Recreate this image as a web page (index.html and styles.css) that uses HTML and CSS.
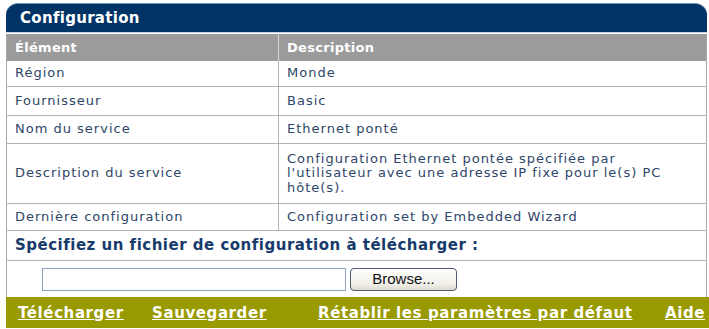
FILE: index.html
```html
<!DOCTYPE html>
<html lang="fr">
<head>
<meta charset="utf-8">
<title>Configuration</title>
<link rel="stylesheet" href="styles.css">
</head>
<body>
<div class="panel">
  <div class="title">Configuration</div>
  <table class="grid">
    <colgroup><col class="c1"><col class="c2"></colgroup>
    <thead>
      <tr class="head"><th>Élément</th><th>Description</th></tr>
    </thead>
    <tbody>
      <tr class="r1"><td>Région</td><td>Monde</td></tr>
      <tr class="r2"><td>Fournisseur</td><td>Basic</td></tr>
      <tr class="r3"><td>Nom du service</td><td>Ethernet ponté</td></tr>
      <tr class="r4"><td>Description du service</td><td>Configuration Ethernet pontée spécifiée par<br>l'utilisateur avec une adresse IP fixe pour le(s) PC<br>hôte(s).</td></tr>
      <tr class="r5"><td>Dernière configuration</td><td>Configuration set by Embedded Wizard</td></tr>
      <tr class="r6"><td colspan="2" class="spec">Spécifiez un fichier de configuration à télécharger :</td></tr>
      <tr class="r7"><td colspan="2" class="filecell"><div class="filerow"><input type="text" class="path"><button type="button" class="browse">Browse...</button></div></td></tr>
    </tbody>
  </table>
  <div class="actions">
    <a href="#" class="act">Télécharger</a>
    <a href="#" class="act">Sauvegarder</a>
    <a href="#" class="act">Rétablir les paramètres par défaut</a>
    <a href="#" class="act">Aide</a>
  </div>
</div>
</body>
</html>
```

FILE: styles.css
```css
html, body {
  margin: 0;
  padding: 0;
  background: #ffffff;
}
body {
  font-family: "DejaVu Sans", Verdana, sans-serif;
  font-size: 13px;
  color: #2e4668;
}
.panel {
  margin: 3px 0 0 6px;
  width: 703px;
}
.title {
  height: 30px;
  box-sizing: border-box;
  background: #003366;
  border-top: 1px solid #6f8fb5;
  border-radius: 12px 12px 0 0;
  border-bottom: 1px solid #c8d4e4;
  color: #ffffff;
  font-weight: bold;
  font-size: 15px;
  letter-spacing: 0.3px;
  line-height: 28px;
  padding-left: 14px;
  margin-right: 2px;
}
.grid {
  width: 701px;
  border-collapse: collapse;
  table-layout: fixed;
  border-left: 1px solid #a8a8a8;
  border-right: 1px solid #a8a8a8;
  margin-top: 1px;
}
.c1 { width: 272px; }
.c2 { width: auto; }
.grid th {
  background: #9b9b9b;
  color: #ffffff;
  font-weight: bold;
  font-size: 13px;
  letter-spacing: 0.3px;
  text-align: left;
  height: 27px;
  padding: 0 8px;
  box-sizing: border-box;
  border-left: 1px solid #d8d8d8;
}
.grid th:first-child { border-left: none; }
.grid td {
  height: 27px;
  padding: 0 8px;
  border-bottom: 1px solid #b4b4b4;
  border-left: 1px solid #b4b4b4;
  vertical-align: middle;
  line-height: 14.5px;
  letter-spacing: 1px;
  white-space: nowrap;
}
.grid td:first-child { border-left: none; }
.r1 td { height: 25px; }
.r2 td { height: 28px; }
.r3 td { height: 27px; }
.r4 td { height: 59px; }
.r5 td { height: 26px; }
.spec {
  height: 29px !important;
  font-weight: bold;
  font-size: 15px;
  color: #173b6b;
  letter-spacing: 0.5px !important;
}
.filecell {
  height: 36px !important;
  border-bottom: none !important;
  padding: 0 !important;
}
.filerow {
  display: flex;
  align-items: center;
  padding-left: 35px;
  gap: 4px;
}
.path {
  width: 304px;
  height: 23px;
  box-sizing: border-box;
  border: 1px solid #8ca3c0;
  margin: 0;
  padding: 0 3px;
  background: #fff;
}
.browse {
  width: 107px;
  height: 23px;
  box-sizing: border-box;
  margin: 0;
  border: 1px solid #4e5c6e;
  border-radius: 4px;
  background: linear-gradient(#ffffff, #f1f0ea 70%, #dedbd0);
  font-family: "Liberation Sans", Arial, sans-serif;
  font-size: 15px;
  color: #111;
  padding: 0;
  line-height: 20px;
}
.actions {
  background: #999900;
  height: 31px;
  display: grid;
  grid-template-columns: 134px 166px 347px auto;
  align-items: center;
  padding-left: 12px;
  box-sizing: border-box;
  width: 703px;
}
.act {
  color: #ffffff;
  font-weight: bold;
  font-size: 15px;
  letter-spacing: 0.6px;
  text-decoration: underline;
  white-space: nowrap;
}
```
